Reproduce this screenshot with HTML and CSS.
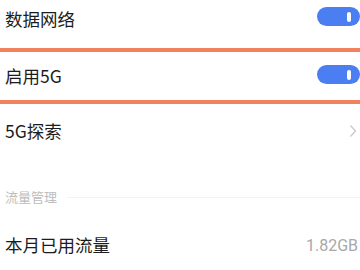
FILE: index.html
```html
<!DOCTYPE html>
<html lang="zh">
<head>
<meta charset="utf-8">
<link rel="stylesheet" href="styles.css">
</head>
<body>
<div class="list">
  <div class="row first">
    <span class="label">数据网络</span>
    <span class="toggle"><span class="knob"></span></span>
  </div>
  <div class="hl"></div>
  <div class="row mid">
    <span class="label">启用5G</span>
    <span class="toggle"><span class="knob"></span></span>
  </div>
  <div class="hl"></div>
  <div class="row tall">
    <span class="label">5G探索</span>
    <svg class="chev" width="8" height="14" viewBox="0 0 8 14"><path d="M1.5 1.5 L6.5 7 L1.5 12.5" fill="none" stroke="#c8c8c8" stroke-width="1.3"/></svg>
  </div>
  <div class="section">
    <span class="sec-title">流量管理</span>
    <span class="sec-line"></span>
  </div>
  <div class="row tall">
    <span class="label">本月已用流量</span>
    <span class="value">1.82GB</span>
  </div>
</div>
</body>
</html>
```
FILE: styles.css
```css
html, body {
  margin: 0;
  padding: 0;
  background: #ffffff;
}
body {
  width: 360px;
  height: 270px;
  overflow: hidden;
  font-family: "Noto Sans CJK SC", "Noto Sans", sans-serif;
}
.list {
  display: flex;
  flex-direction: column;
}
.row {
  display: flex;
  align-items: center;
  justify-content: space-between;
  padding: 0 2px 0 5px;
  box-sizing: border-box;
}
.row.first {
  height: 48px;
  padding-bottom: 11px;
}
.row.mid {
  height: 48px;
}
.row.tall {
  height: 54px;
}
.label {
  font-size: 17.5px;
  color: #1c1c1c;
  line-height: 20px;
}
.hl {
  height: 4px;
  background: #f2825e;
}
.toggle {
  position: relative;
  width: 43px;
  height: 19px;
  border-radius: 10px;
  background: #4b7ef1;
  margin-right: -2px;
  margin-bottom: 4px;
}
.knob {
  position: absolute;
  right: 9px;
  top: 5px;
  width: 4px;
  height: 10px;
  border-radius: 2px;
  background: #ffffff;
}
.chev {
  margin-right: 1px;
  margin-bottom: 1px;
}
.section {
  height: 60px;
  box-sizing: border-box;
  padding: 18px 0 0 5px;
  display: flex;
  align-items: center;
}
.sec-title {
  font-size: 13px;
  color: #bdbdbd;
  line-height: 16px;
}
.sec-line {
  flex: 1;
  height: 1px;
  background: #f3f3f3;
  margin-left: 10px;
}
.value {
  font-family: "Roboto", "Noto Sans", sans-serif;
  font-size: 16px;
  color: #a8a8a8;
}
```
